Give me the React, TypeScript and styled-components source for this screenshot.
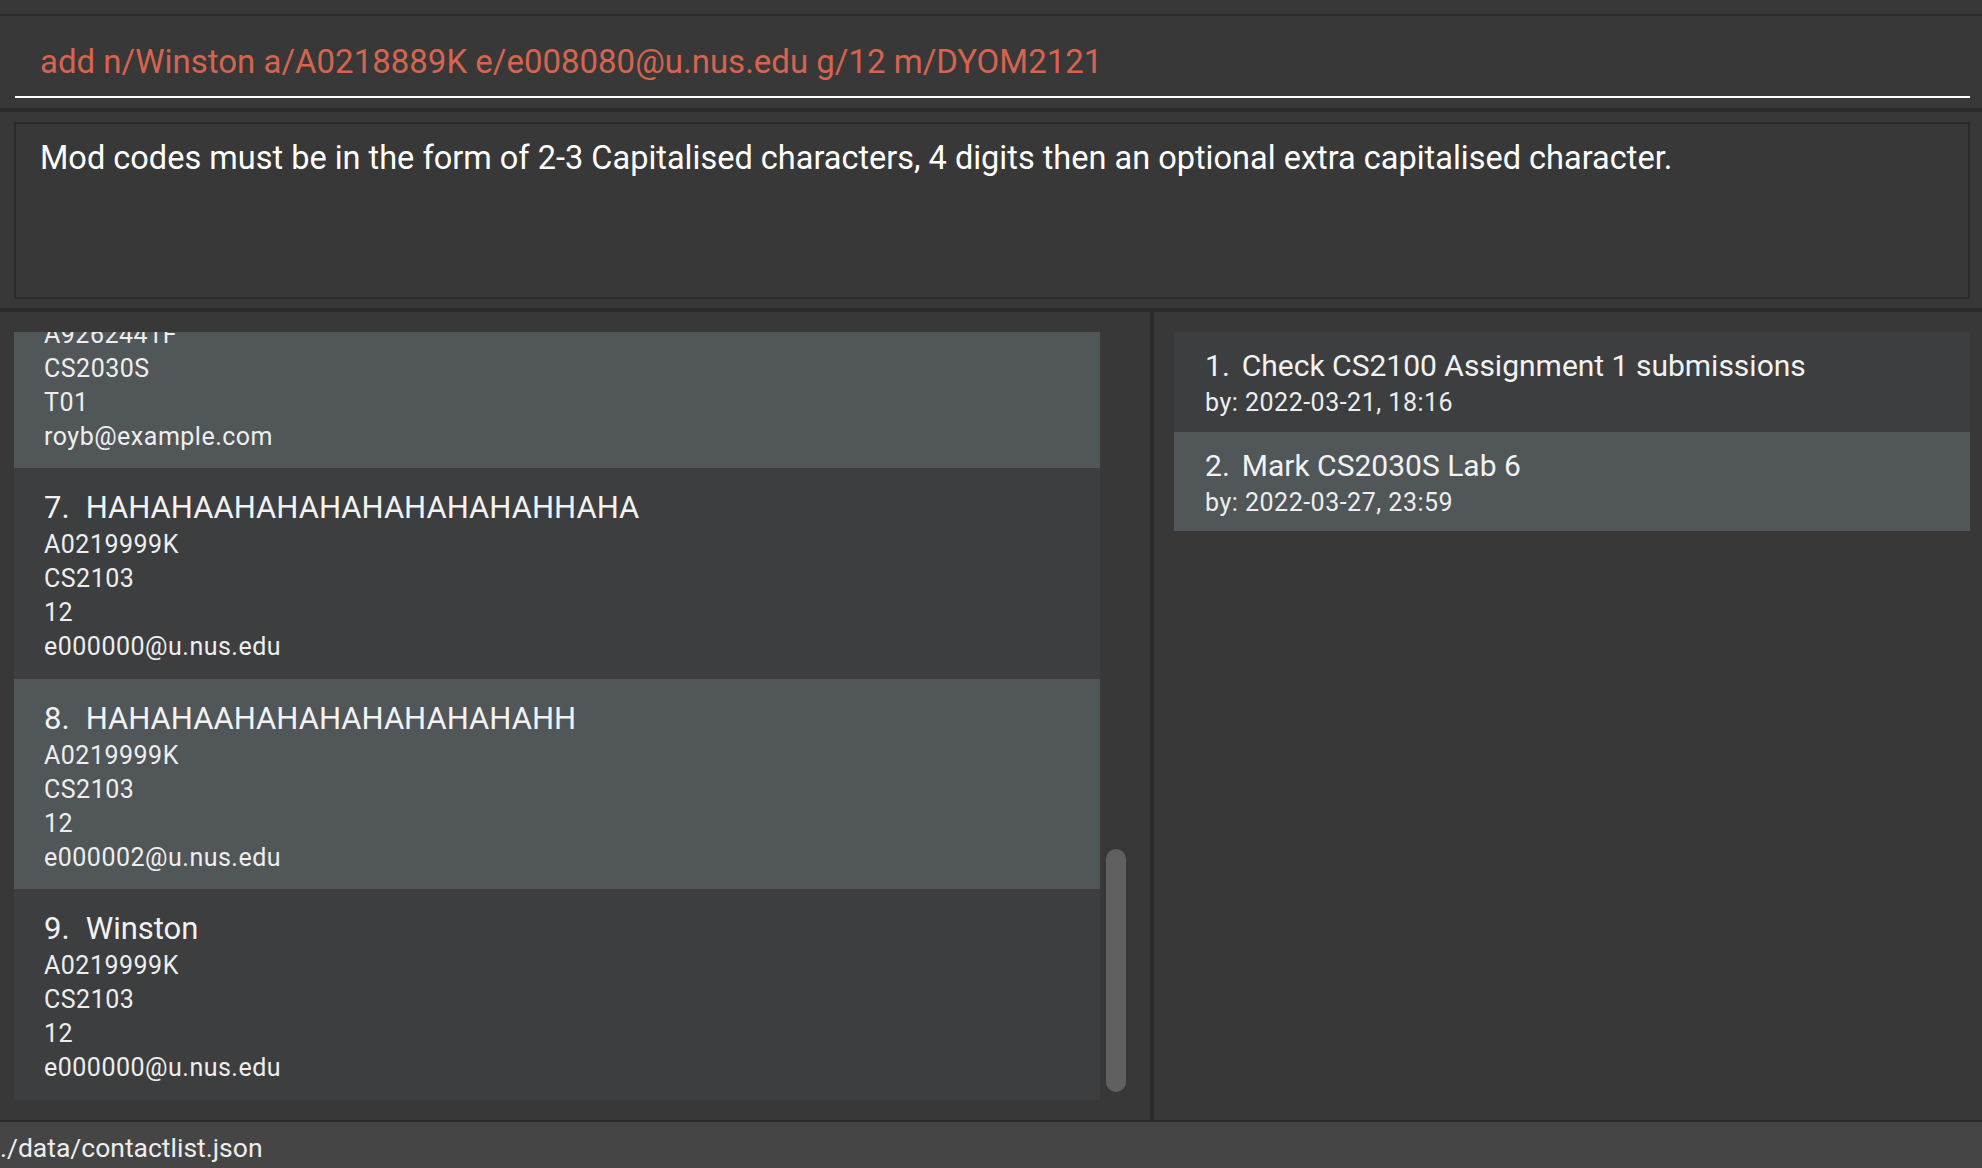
import React, { useLayoutEffect, useRef } from "react";
import styled, { createGlobalStyle } from "styled-components";

const GlobalStyle = createGlobalStyle`
  html, body {
    margin: 0;
    padding: 0;
    background: #383838;
    overflow: hidden;
  }
  * { box-sizing: border-box; }
  #root { height: 100vh; }
`;

const FONT = `"Roboto", "Inter", "Liberation Sans", sans-serif`;

const Window = styled.div`
  height: 100vh;
  display: flex;
  flex-direction: column;
  background: #383838;
  font-family: ${FONT};
  color: #f0f0f0;
`;

const MenuBar = styled.div`
  height: 16px;
  flex: none;
  border-bottom: 2px solid #2b2b2b;
`;

const CommandPane = styled.div`
  height: 96px;
  flex: none;
  padding: 0 12px 0 15px;
  border-bottom: 4px solid #2b2b2b;
`;

const CommandField = styled.div`
  height: 82px;
  padding: 10px 0 0 25px;
  display: flex;
  align-items: center;
  border-bottom: 2px solid #ffffff;
  font-size: 33px;
  color: #d6644f;
  white-space: nowrap;
`;

const ResultPane = styled.div`
  height: 200px;
  flex: none;
  padding: 10px 12px 9px 14px;
  border-bottom: 4px solid #2b2b2b;
`;

const ResultBox = styled.div`
  height: 100%;
  border: 2px solid #2b2b2b;
  padding: 15px 24px;
  font-size: 32.5px;
  line-height: 38px;
  color: #ffffff;
`;

const MainSplit = styled.div`
  flex: 1;
  min-height: 0;
  display: flex;
`;

const ContactPane = styled.div`
  position: relative;
  width: 1150px;
  flex: none;
  padding: 20px 50px 20px 14px;
  display: flex;
  flex-direction: column;
`;

const Divider = styled.div`
  width: 4px;
  flex: none;
  background: #2b2b2b;
`;

const TaskPane = styled.div`
  flex: 1;
  padding: 20px 12px 20px 20px;
  display: flex;
  flex-direction: column;
`;

const ListViewport = styled.div`
  flex: 1;
  min-height: 0;
  overflow: hidden;
  display: flex;
  flex-direction: column;
`;

const Card = styled.div<{ $alt: boolean }>`
  flex: none;
  background: ${(p) => (p.$alt ? "#515658" : "#3c3e3f")};
`;

const ContactCard = styled(Card)`
  height: 210.5px;
  padding: 20px 30px 0 30px;
`;

const TaskCard = styled(Card)`
  height: 99.5px;
  padding: 14px 31px 0 31px;
`;

const CardTitle = styled.div<{ $size: number }>`
  display: flex;
  gap: ${(p) => (p.$size > 30 ? 16 : 12)}px;
  font-size: ${(p) => p.$size}px;
  line-height: 40px;
  color: #f2f2f2;
  white-space: nowrap;
`;

const CardLine = styled.div`
  font-size: 25px;
  line-height: 34px;
  letter-spacing: 0.5px;
  color: #eeeeee;
  white-space: nowrap;
`;

const ScrollThumb = styled.div`
  position: absolute;
  top: 537px;
  bottom: 28px;
  right: 24px;
  width: 20px;
  border-radius: 10px;
  background: #606060;
`;

const StatusBar = styled.div`
  height: 48px;
  flex: none;
  border-top: 2px solid #2b2b2b;
  background: #454545;
  padding-top: 4px;
  display: flex;
  align-items: center;
  font-size: 26.5px;
  color: #eeeeee;
`;

type Contact = { name: string; id: string; mod: string; group: string; email: string };

const contacts: Contact[] = [
  { name: "Alex Yeoh", id: "A0123456X", mod: "CS2103T", group: "T02", email: "alexyeoh@example.com" },
  { name: "Bernice Yu", id: "A0234567Y", mod: "CS2101", group: "G05", email: "berniceyu@example.com" },
  { name: "Charlotte Oliveiro", id: "A0345678Z", mod: "CS2040S", group: "B03", email: "charlotte@example.com" },
  { name: "David Li", id: "A0456789W", mod: "CS2100", group: "T11", email: "lidavid@example.com" },
  { name: "Irfan Ibrahim", id: "A0567890V", mod: "CS1231S", group: "T07", email: "irfan@example.com" },
  { name: "Roy Balakrishnan", id: "A9262441F", mod: "CS2030S", group: "T01", email: "royb@example.com" },
  { name: "HAHAHAAHAHAHAHAHAHAHAHHAHA", id: "A0219999K", mod: "CS2103", group: "12", email: "e000000@u.nus.edu" },
  { name: "HAHAHAAHAHAHAHAHAHAHAHH", id: "A0219999K", mod: "CS2103", group: "12", email: "e000002@u.nus.edu" },
  { name: "Winston", id: "A0219999K", mod: "CS2103", group: "12", email: "e000000@u.nus.edu" },
];

const tasks = [
  { title: "Check CS2100 Assignment 1 submissions", by: "2022-03-21, 18:16" },
  { title: "Mark CS2030S Lab 6", by: "2022-03-27, 23:59" },
];

export default function App() {
  const viewportRef = useRef<HTMLDivElement>(null);

  useLayoutEffect(() => {
    const el = viewportRef.current;
    if (el) el.scrollTop = el.scrollHeight;
  }, []);

  return (
    <>
      <GlobalStyle />
      <Window>
        <MenuBar />
        <CommandPane>
          <CommandField>add n/Winston a/A0218889K e/e008080@u.nus.edu g/12 m/DYOM2121</CommandField>
        </CommandPane>
        <ResultPane>
          <ResultBox>
            Mod codes must be in the form of 2-3 Capitalised characters, 4 digits then an optional extra
            capitalised character.
          </ResultBox>
        </ResultPane>
        <MainSplit>
          <ContactPane>
            <ListViewport ref={viewportRef}>
              {contacts.map((c, i) => (
                <ContactCard key={i} $alt={i % 2 === 1}>
                  <CardTitle $size={31}>
                    <span>{i + 1}.</span>
                    <span>{c.name}</span>
                  </CardTitle>
                  <CardLine>{c.id}</CardLine>
                  <CardLine>{c.mod}</CardLine>
                  <CardLine>{c.group}</CardLine>
                  <CardLine>{c.email}</CardLine>
                </ContactCard>
              ))}
            </ListViewport>
            <ScrollThumb />
          </ContactPane>
          <Divider />
          <TaskPane>
            <ListViewport>
              {tasks.map((t, i) => (
                <TaskCard key={i} $alt={i % 2 === 1}>
                  <CardTitle $size={30}>
                    <span>{i + 1}.</span>
                    <span>{t.title}</span>
                  </CardTitle>
                  <CardLine>by: {t.by}</CardLine>
                </TaskCard>
              ))}
            </ListViewport>
          </TaskPane>
        </MainSplit>
        <StatusBar>./data/contactlist.json</StatusBar>
      </Window>
    </>
  );
}
